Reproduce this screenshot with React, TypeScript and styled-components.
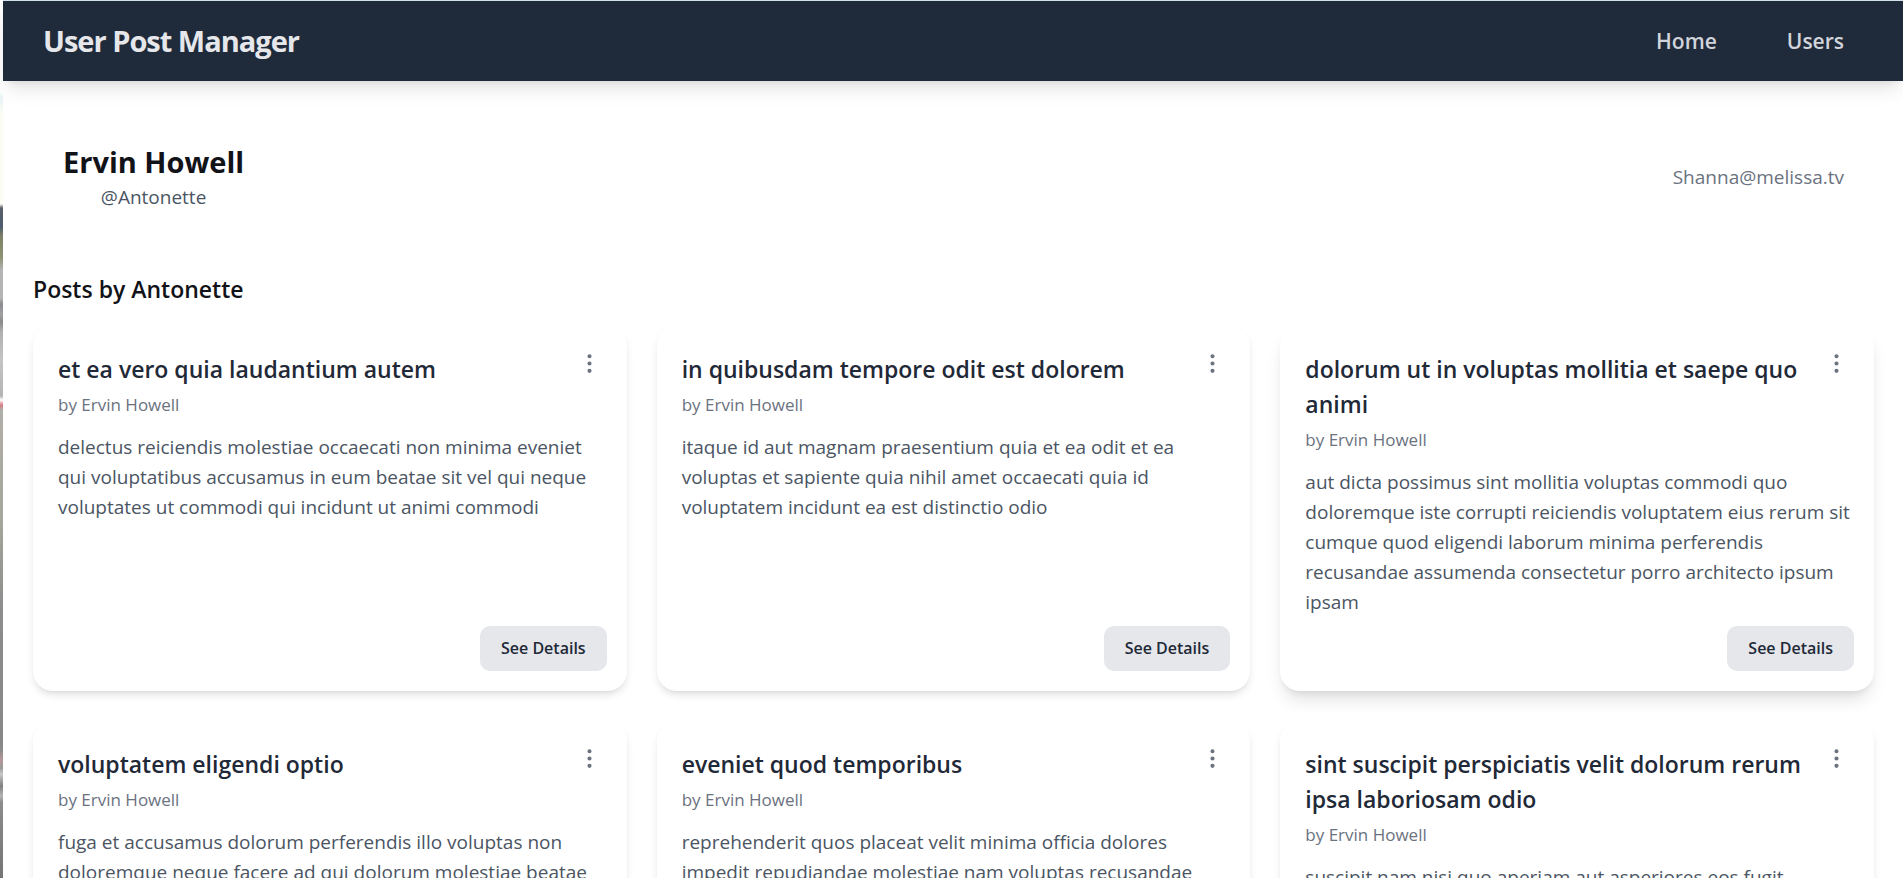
import React from "react";
import styled, { createGlobalStyle } from "styled-components";
import { EllipsisVertical } from "lucide-react";

const GlobalStyle = createGlobalStyle`
  *, *::before, *::after { box-sizing: border-box; }
  body {
    margin: 0;
    background: #fff;
    font-family: "Open Sans", "Noto Sans", sans-serif;
    font-size: 19px;
    line-height: 30px;
    color: #111318;
  }
  h1, h2, h3, p { margin: 0; }
`;

const Shell = styled.div`
  display: flex;
  min-height: 100vh;
`;

const Backdrop = styled.div`
  flex: 0 0 3px;
  background: linear-gradient(
    to bottom,
    #fefefe 0, #fefefe 92px, #e6f3f7 98px, #fbfcf3 112px, #fbfcf3 204px,
    #5a6068 208px, #4e5a70 226px, #7c8066 236px, #8e9474 258px, #b4b4b6 270px,
    #b4b4b6 298px, #8c8c90 304px, #a0a0a2 314px, #8a8a8c 322px, #b0b0b2 332px,
    #c4c4c4 360px, #b4b4b6 396px, #ffffff 400px, #d87a86 405px, #b0aea8 410px,
    #a6a69c 520px, #8c8c8c 610px, #888 740px, #8a8a8a 750px, #b8969c 760px,
    #9a9a9a 768px, #c8c8c8 774px, #808080 786px, #b4b4b4 796px, #8c8c8c 802px,
    #747474 878px
  );
`;

const Page = styled.div`
  flex: 1;
  min-width: 0;
  border-top: 1px solid #cfe3e8;
`;

const Header = styled.header`
  display: flex;
  align-items: center;
  justify-content: space-between;
  height: 80px;
  padding: 0 59px 0 40px;
  background: #1f2a3a;
  box-shadow: 0 12px 18px -4px rgba(0, 0, 0, 0.1), 0 5px 8px -5px rgba(0, 0, 0, 0.1);
`;

const Brand = styled.h1`
  font-size: 29px;
  line-height: 40px;
  font-weight: 700;
  letter-spacing: -1px;
  color: #e5e7eb;
`;

const Nav = styled.nav`
  display: flex;
  gap: 70px;
`;

const NavLink = styled.a`
  font-size: 21px;
  line-height: 35px;
  font-weight: 600;
  color: #d1d5db;
  text-decoration: none;
`;

const Main = styled.main`
  padding: 31px 29px 30px 30px;
`;

const Profile = styled.section`
  display: flex;
  align-items: center;
  justify-content: space-between;
  padding: 30px;
`;

const Identity = styled.div`
  text-align: center;
`;

const Name = styled.h2`
  font-size: 29px;
  line-height: 40px;
  font-weight: 700;
`;

const Handle = styled.p`
  color: #4b5563;
`;

const Email = styled.p`
  color: #6b7280;
`;

const PostsHeading = styled.h2`
  margin: 30px 0 19px;
  font-size: 23px;
  line-height: 35px;
  font-weight: 600;
`;

const PostGrid = styled.section`
  display: grid;
  grid-template-columns: repeat(3, minmax(0, 1fr));
  gap: 30px;
`;

const Card = styled.article<{ $raised?: boolean }>`
  display: flex;
  flex-direction: column;
  min-height: 365px;
  padding: 25px 20px 20px 25px;
  border-radius: 20px;
  background: #fff;
  box-shadow: ${({ $raised }) =>
    $raised
      ? "0 12px 18px -4px rgba(0, 0, 0, 0.12), 0 5px 8px -5px rgba(0, 0, 0, 0.12)"
      : "0 5px 8px -1px rgba(0, 0, 0, 0.1), 0 3px 5px -3px rgba(0, 0, 0, 0.1)"};
`;

const CardTop = styled.div`
  display: flex;
  align-items: flex-start;
  justify-content: space-between;
`;

const Title = styled.h3`
  padding-top: 1px;
  font-size: 23px;
  line-height: 35px;
  font-weight: 600;
  color: #1f2937;
`;

const MenuButton = styled.button`
  display: flex;
  flex: none;
  padding: 0;
  margin-right: 5px;
  border: 0;
  background: none;
  color: #6b7280;
  cursor: pointer;
`;

const Author = styled.p`
  margin-top: 5px;
  font-size: 17px;
  line-height: 25px;
  color: #6b7280;
`;

const Body = styled.p`
  margin: 15px 0 9px;
  color: #4b5563;
`;

const DetailsButton = styled.button`
  align-self: flex-end;
  margin-top: auto;
  padding: 10px 21px;
  border: 0;
  border-radius: 10px;
  background: #e5e7eb;
  font-family: inherit;
  font-size: 16px;
  line-height: 25px;
  font-weight: 600;
  color: #1f2937;
  cursor: pointer;
`;

type Post = { title: string; body: string; raised?: boolean };

const posts: Post[] = [
  {
    title: "et ea vero quia laudantium autem",
    body: "delectus reiciendis molestiae occaecati non minima eveniet qui voluptatibus accusamus in eum beatae sit vel qui neque voluptates ut commodi qui incidunt ut animi commodi",
  },
  {
    title: "in quibusdam tempore odit est dolorem",
    body: "itaque id aut magnam praesentium quia et ea odit et ea voluptas et sapiente quia nihil amet occaecati quia id voluptatem incidunt ea est distinctio odio",
  },
  {
    title: "dolorum ut in voluptas mollitia et saepe quo animi",
    body: "aut dicta possimus sint mollitia voluptas commodi quo doloremque iste corrupti reiciendis voluptatem eius rerum sit cumque quod eligendi laborum minima perferendis recusandae assumenda consectetur porro architecto ipsum ipsam",
    raised: true,
  },
  {
    title: "voluptatem eligendi optio",
    body: "fuga et accusamus dolorum perferendis illo voluptas non doloremque neque facere ad qui dolorum molestiae beatae sed aut voluptas totam sit illum",
  },
  {
    title: "eveniet quod temporibus",
    body: "reprehenderit quos placeat velit minima officia dolores impedit repudiandae molestiae nam voluptas recusandae quis delectus officiis harum fugiat vitae",
  },
  {
    title: "sint suscipit perspiciatis velit dolorum rerum ipsa laboriosam odio",
    body: "suscipit nam nisi quo aperiam aut asperiores eos fugit maiores voluptatibus quia voluptatem quis ullam qui in alias quia est consequatur magni mollitia accusamus ea nisi voluptate dicta",
  },
];

function PostCard({ title, body, raised }: Post) {
  return (
    <Card $raised={raised}>
      <CardTop>
        <Title>{title}</Title>
        <MenuButton type="button" aria-label="Post options">
          <EllipsisVertical size={25} />
        </MenuButton>
      </CardTop>
      <Author>by Ervin Howell</Author>
      <Body>{body}</Body>
      <DetailsButton type="button">See Details</DetailsButton>
    </Card>
  );
}

export default function App() {
  return (
    <Shell>
      <GlobalStyle />
      <Backdrop />
      <Page>
        <Header>
          <Brand>User Post Manager</Brand>
          <Nav>
            <NavLink href="#home">Home</NavLink>
            <NavLink href="#users">Users</NavLink>
          </Nav>
        </Header>
        <Main>
          <Profile>
            <Identity>
              <Name>Ervin Howell</Name>
              <Handle>@Antonette</Handle>
            </Identity>
            <Email>Shanna@melissa.tv</Email>
          </Profile>
          <PostsHeading>Posts by Antonette</PostsHeading>
          <PostGrid>
            {posts.map((post) => (
              <PostCard key={post.title} {...post} />
            ))}
          </PostGrid>
        </Main>
      </Page>
    </Shell>
  );
}
